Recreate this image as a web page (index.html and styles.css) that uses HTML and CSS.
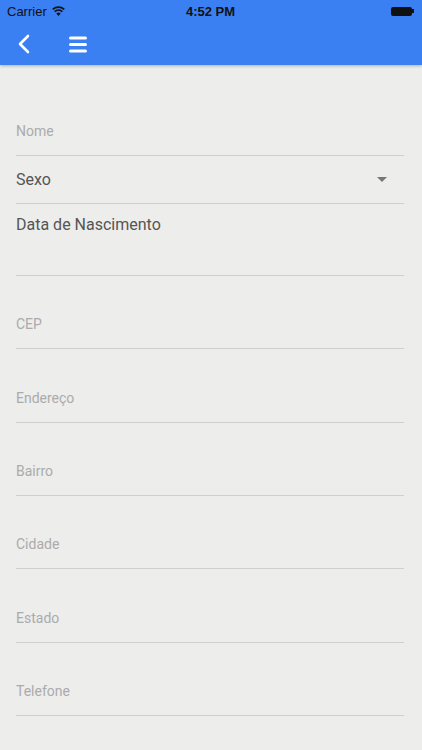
FILE: index.html
```html
<!DOCTYPE html>
<html lang="pt">
<head>
  <meta charset="UTF-8" />
  <meta name="viewport" content="width=device-width, initial-scale=1.0" />
  <title>Cadastro</title>
  <link rel="stylesheet" href="styles.css">
</head>
<body>
  <header class="topbar">
    <div class="status">
      <span class="carrier">Carrier
        <svg class="wifi" width="13" height="10" viewBox="0 0 13 10">
          <path d="M6.5 10 L4.3 7.4 A3.4 3.4 0 0 1 8.7 7.4 Z" fill="#111"/>
          <path d="M2.6 5.6 A5.8 5.8 0 0 1 10.4 5.6" stroke="#111" stroke-width="1.6" fill="none"/>
          <path d="M0.7 3.4 A8.6 8.6 0 0 1 12.3 3.4" stroke="#111" stroke-width="1.6" fill="none"/>
        </svg>
      </span>
      <span class="time">4:52 PM</span>
      <span class="battery"><span class="battery-body"></span><span class="battery-nub"></span></span>
    </div>
    <nav class="navbar">
      <svg class="back" width="14" height="20" viewBox="0 0 14 20">
        <path d="M11 2 L3 10 L11 18" stroke="#fff" stroke-width="2.6" fill="none" stroke-linecap="round" stroke-linejoin="round"/>
      </svg>
      <svg class="menu" width="20" height="18" viewBox="0 0 20 18">
        <rect x="1" y="1.5" width="18" height="3" rx="1.5" fill="#fff"/>
        <rect x="1" y="8" width="18" height="3" rx="1.5" fill="#fff"/>
        <rect x="1" y="14.5" width="18" height="3" rx="1.5" fill="#fff"/>
      </svg>
    </nav>
  </header>

  <main class="form">
    <div class="field first"><span class="placeholder">Nome</span></div>
    <div class="field select"><span class="value">Sexo</span><span class="caret"></span></div>
    <div class="field date"><span class="value">Data de Nascimento</span></div>
    <div class="field"><span class="placeholder">CEP</span></div>
    <div class="field"><span class="placeholder">Endereço</span></div>
    <div class="field"><span class="placeholder">Bairro</span></div>
    <div class="field"><span class="placeholder">Cidade</span></div>
    <div class="field"><span class="placeholder">Estado</span></div>
    <div class="field"><span class="placeholder">Telefone</span></div>
  </main>
</body>
</html>
```

FILE: styles.css
```css
body {
  margin: 0;
  padding: 0;
  background-color: #ededeb;
  font-family: Roboto, 'Liberation Sans', sans-serif;
  min-height: 100vh;
  overflow: hidden;
}
.topbar {
  background-color: #3a80f2;
  box-shadow: 0 1px 3px rgba(0, 0, 0, 0.25);
}
.status {
  height: 22px;
  display: flex;
  align-items: center;
  justify-content: space-between;
  padding: 0 8px 0 7px;
  font-family: 'Liberation Sans', Arial, sans-serif;
  font-size: 13px;
  color: #111;
}
.carrier {
  display: flex;
  align-items: center;
  gap: 5px;
  width: 100px;
}
.time {
  font-weight: bold;
  font-size: 13px;
}
.battery {
  width: 100px;
  display: flex;
  justify-content: flex-end;
  align-items: center;
}
.battery-body {
  width: 21px;
  height: 9px;
  background: #111;
  border-radius: 2px;
}
.battery-nub {
  width: 1.5px;
  height: 4px;
  background: #111;
}
.navbar {
  height: 43px;
  display: flex;
  align-items: center;
  padding: 0 0 0 17px;
  gap: 37px;
}
.navbar svg {
  display: block;
}
.form {
  padding: 26px 18px 0 16px;
}
.field {
  border-bottom: 1px solid #cfcfcd;
  display: flex;
  align-items: flex-end;
  padding-bottom: 16px;
  box-sizing: border-box;
  height: 73.33px;
}
.field.first {
  height: 65px;
}
.placeholder {
  font-size: 14px;
  color: #ababab;
}
.value {
  font-size: 16px;
  color: #555;
}
.field.select {
  height: 48px;
  align-items: center;
  justify-content: space-between;
  padding: 0 17px 0 0;
}
.caret {
  width: 0;
  height: 0;
  border-left: 5px solid transparent;
  border-right: 5px solid transparent;
  border-top: 5px solid #777;
}
.field.date {
  height: 72px;
  align-items: flex-start;
  padding: 11px 0 0;
}
```
